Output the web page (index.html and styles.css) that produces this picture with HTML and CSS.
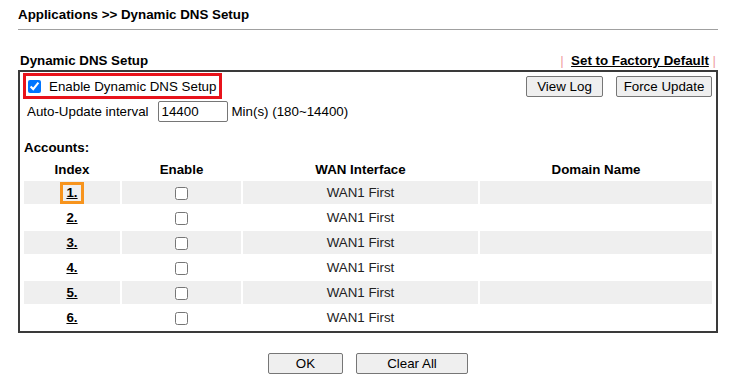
FILE: index.html
```html
<!DOCTYPE html>
<html>
<head>
    <title>Dynamic DNS Setup</title>
    <link rel="stylesheet" href="styles.css">
</head>
<body>
    <div class="page">
        <h1 class="crumb">Applications &gt;&gt; Dynamic DNS Setup</h1>

        <div class="section-head">
            <span class="section-title">Dynamic DNS Setup</span>
            <span class="factory"><span class="bar">|</span>&nbsp; <a href="#">Set to Factory Default</a> <span class="bar">|</span></span>
        </div>

        <div class="panel">
            <div class="top-row">
                <label class="enable-box"><input type="checkbox" checked>Enable Dynamic DNS Setup</label>
                <div class="actions">
                    <button type="button" class="btn btn-log">View Log</button>
                    <button type="button" class="btn btn-force">Force Update</button>
                </div>
            </div>
            <div class="interval">
                <span>Auto-Update interval</span>
                <input type="text" class="interval-input" value="14400">
                <span>Min(s) (180~14400)</span>
            </div>
            <div class="accounts-label">Accounts:</div>
            <table class="accounts">
                <tr>
                    <th class="col-index">Index</th>
                    <th class="col-enable">Enable</th>
                    <th class="col-wan">WAN Interface</th>
                    <th class="col-domain">Domain Name</th>
                </tr>
                <tr class="odd">
                    <td><a href="#" class="idx focus-mark">1.</a></td>
                    <td><input type="checkbox"></td>
                    <td>WAN1 First</td>
                    <td></td>
                </tr>
                <tr>
                    <td><a href="#" class="idx">2.</a></td>
                    <td><input type="checkbox"></td>
                    <td>WAN1 First</td>
                    <td></td>
                </tr>
                <tr class="odd">
                    <td><a href="#" class="idx">3.</a></td>
                    <td><input type="checkbox"></td>
                    <td>WAN1 First</td>
                    <td></td>
                </tr>
                <tr>
                    <td><a href="#" class="idx">4.</a></td>
                    <td><input type="checkbox"></td>
                    <td>WAN1 First</td>
                    <td></td>
                </tr>
                <tr class="odd">
                    <td><a href="#" class="idx">5.</a></td>
                    <td><input type="checkbox"></td>
                    <td>WAN1 First</td>
                    <td></td>
                </tr>
                <tr>
                    <td><a href="#" class="idx">6.</a></td>
                    <td><input type="checkbox"></td>
                    <td>WAN1 First</td>
                    <td></td>
                </tr>
            </table>
        </div>

        <div class="footer">
            <button type="button" class="btn btn-ok">OK</button>
            <button type="button" class="btn btn-clear">Clear All</button>
        </div>
    </div>
</body>
</html>
```

FILE: styles.css
```css
body {
    margin: 0;
    font-family: "Liberation Sans", Arial, sans-serif;
    font-size: 13.33px;
    color: #000;
    background: #fff;
}
.page {
    width: 700px;
    margin-left: 18px;
}
.crumb {
    margin: 0;
    padding: 7px 0 6px 0;
    font-size: 13.33px;
    line-height: 16px;
    font-weight: bold;
    border-bottom: 1px solid #a0a0a0;
}
.section-head {
    display: flex;
    justify-content: space-between;
    margin-top: 23px;
    margin-bottom: 1px;
    line-height: 16px;
    font-weight: bold;
}
.section-title {
    padding-left: 2px;
}
.factory {
    padding-right: 2px;
}
.factory a {
    color: #000;
    text-decoration: underline;
}
.factory .bar {
    color: #f0a0a0;
    font-weight: normal;
}
.panel {
    border: 2px solid #3a3a3a;
    padding: 1px 2px 0 2px;
}
.top-row {
    display: flex;
    justify-content: space-between;
    align-items: center;
}
.enable-box {
    display: flex;
    align-items: center;
    height: 20px;
    padding-right: 3px;
    margin-left: 1px;
    border: 3px solid #e8131b;
}
.enable-box input {
    width: 13px;
    height: 13px;
    margin: 0 8px 0 2px;
}
.actions {
    display: flex;
    gap: 13px;
    padding-right: 2px;
}
.btn {
    height: 21px;
    padding: 0;
    font-family: "Liberation Sans", Arial, sans-serif;
    font-size: 13.33px;
    color: #000;
    background: #efefef;
    border: 1px solid #767676;
    border-radius: 2px;
}
.btn-log {
    width: 77px;
}
.btn-force {
    width: 96px;
}
.interval {
    display: flex;
    align-items: center;
    margin-top: 1px;
    padding-left: 5px;
    height: 23px;
}
.interval-input {
    width: 70px;
    height: 21px;
    box-sizing: border-box;
    margin: 0 4px 0 9px;
    padding: 1px 3px;
    font-family: "Liberation Sans", Arial, sans-serif;
    font-size: 13.33px;
    border: 1px solid #767676;
    border-radius: 2px;
}
.accounts-label {
    margin-top: 17px;
    padding-left: 2px;
    line-height: 16px;
    font-weight: bold;
}
.accounts {
    width: 100%;
    border-spacing: 2px;
    margin-top: 1px;
}
.accounts th {
    height: 20px;
    padding: 0;
    font-weight: bold;
    text-align: center;
}
.accounts td {
    height: 23px;
    padding: 0;
    text-align: center;
    color: #222;
}
.accounts td input {
    margin: 0;
    width: 13px;
    height: 13px;
    vertical-align: middle;
}
.col-index {
    width: 96px;
}
.col-enable {
    width: 119px;
}
.col-wan {
    width: 235px;
}
.odd td {
    background: #efefef;
}
.idx {
    color: #000;
    font-weight: bold;
    text-decoration: underline;
}
.focus-mark {
    display: inline-block;
    line-height: 16px;
    padding: 0 3px;
    outline: 3px solid #f7941d;
}
.footer {
    display: flex;
    justify-content: center;
    gap: 13px;
    margin-top: 20px;
}
.btn-ok {
    width: 75px;
}
.btn-clear {
    width: 112px;
}
```
